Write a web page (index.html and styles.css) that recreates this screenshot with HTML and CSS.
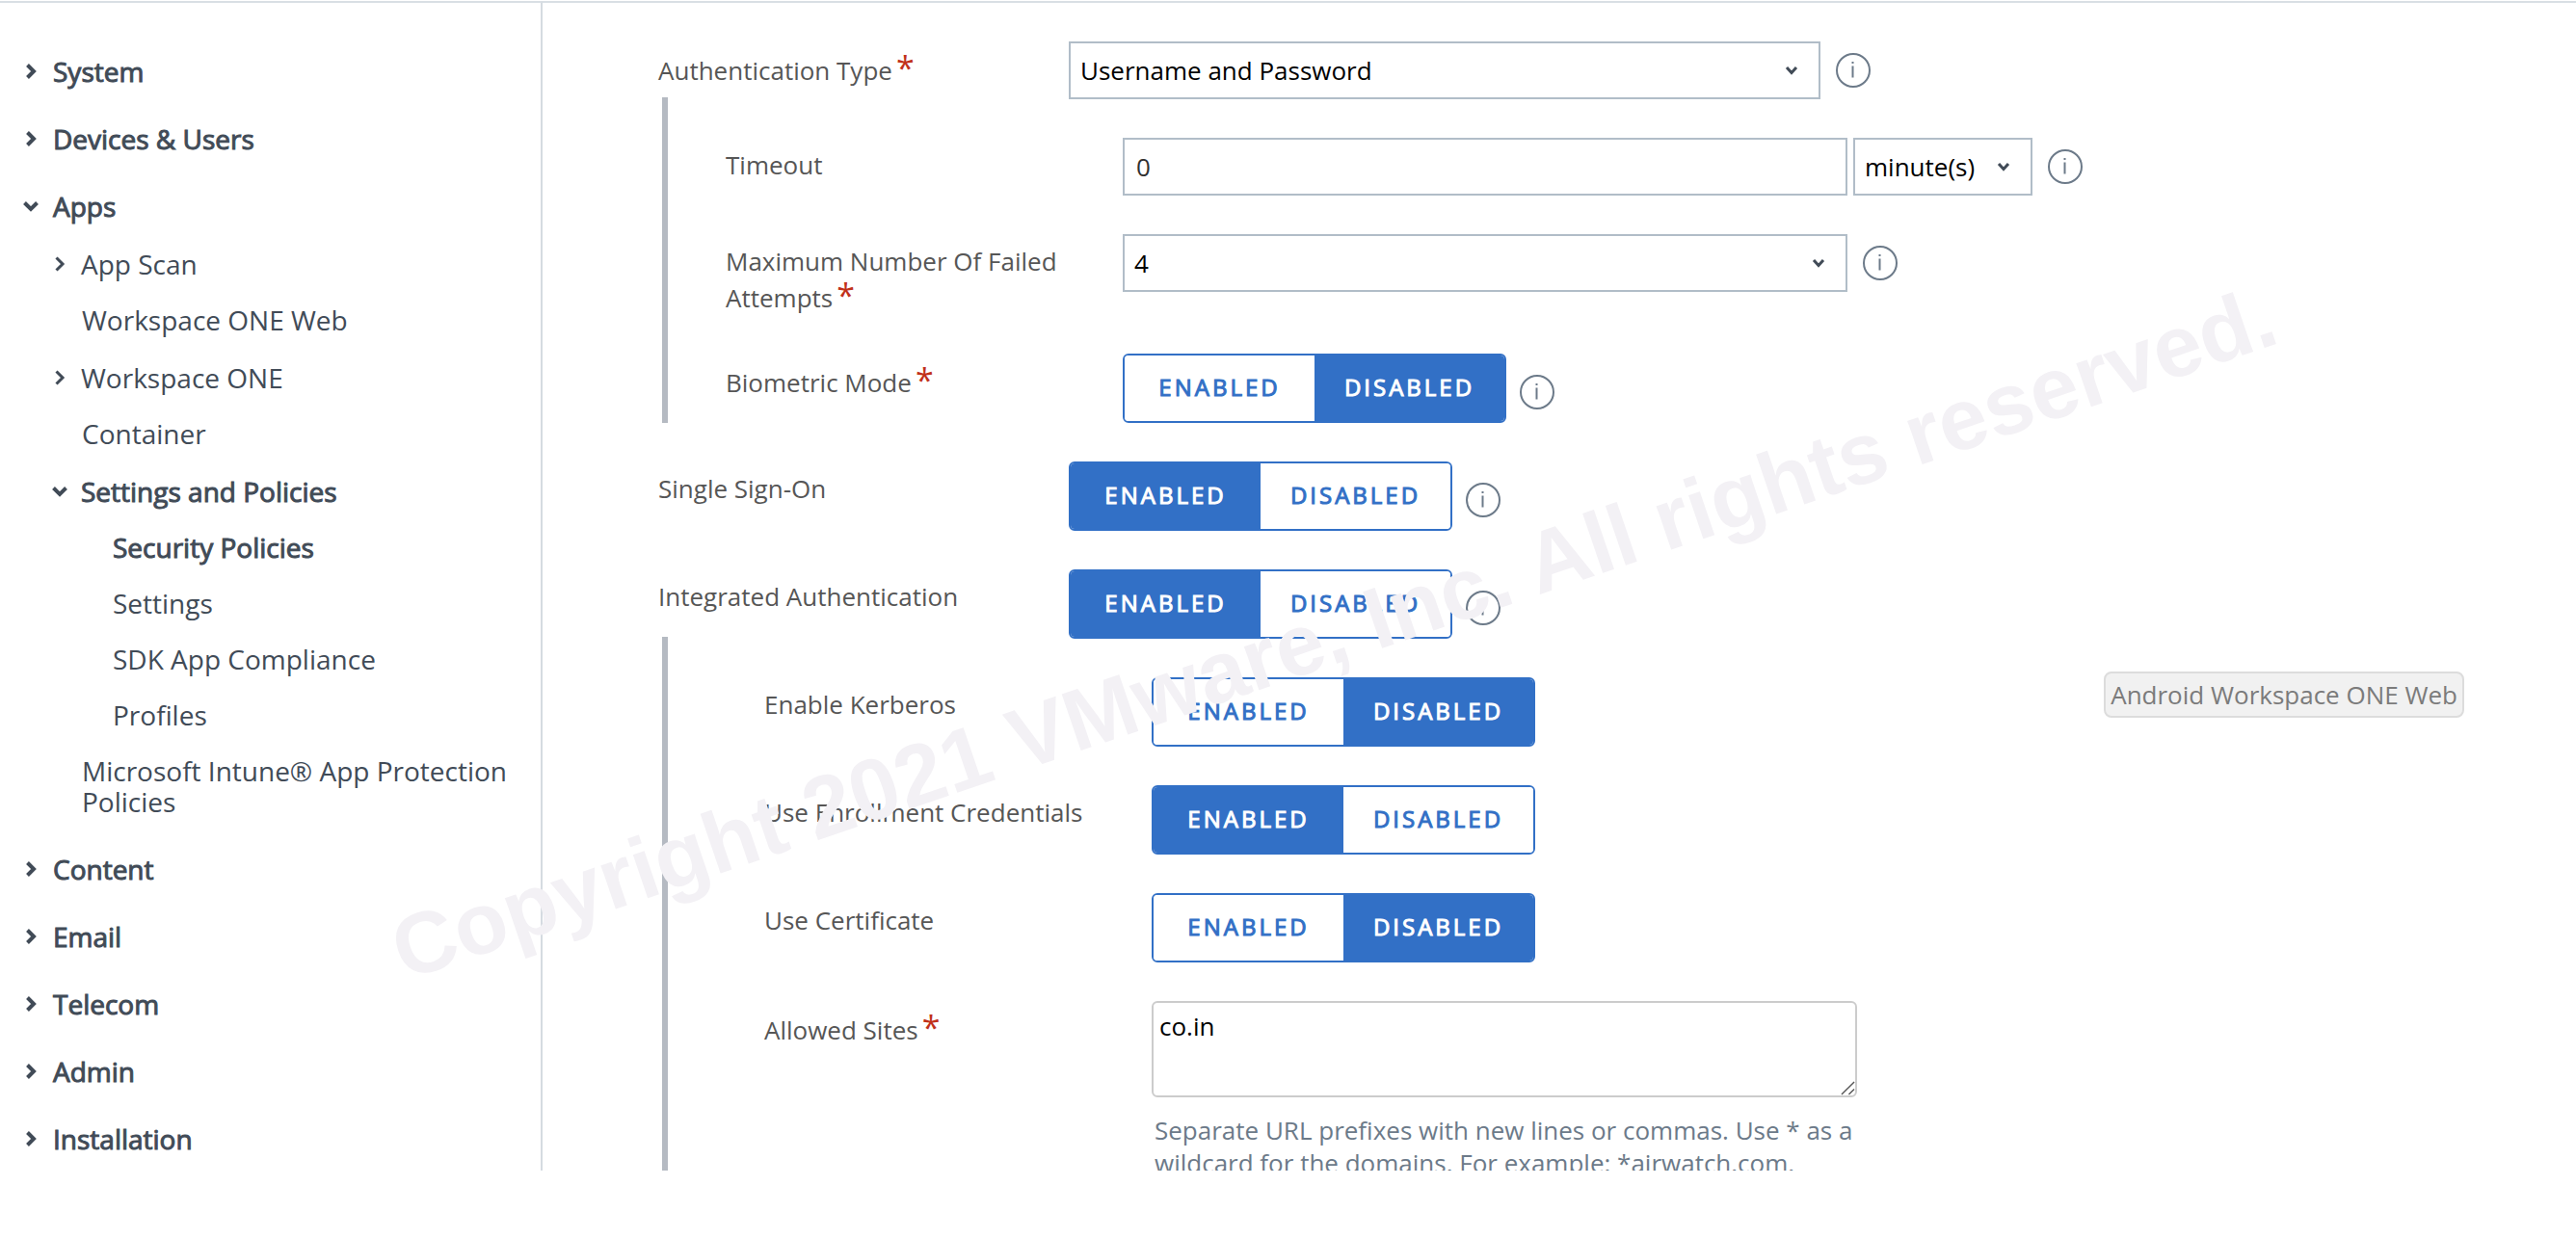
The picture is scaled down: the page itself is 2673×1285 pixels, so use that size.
FILE: index.html
```html
<!DOCTYPE html>
<html lang="en">
<head>
<meta charset="utf-8">
<meta name="viewport" content="width=device-width, initial-scale=1">
<title>Settings - Security Policies</title>
<link rel="stylesheet" href="styles.css">
</head>
<body>
<svg class="symbols" aria-hidden="true">
  <symbol id="chevron-right" viewBox="0 0 16 16"><path d="M4.500 1.500l6.500 6.500-6.500 6.500"/></symbol>
  <symbol id="chevron-down" viewBox="0 0 16 16"><path d="M1.500 4.500l6.500 6.500 6.500-6.500"/></symbol>
  <symbol id="caret" viewBox="0 0 16 16"><path d="M3 5l5 5.500 5-5.500"/></symbol>
  <symbol id="info" viewBox="0 0 36 36"><circle cx="18" cy="18" r="17"/><path d="M17.500 9v2M17.500 13.500v12"/></symbol>
</svg>
<div class="shell">
  <nav class="sidebar" aria-label="Settings">
    <ul class="tree">
      <li><a class="node node--top" href="#system"><svg class="chevron"><use href="#chevron-right"/></svg>System</a></li>
      <li><a class="node node--top" href="#devices"><svg class="chevron"><use href="#chevron-right"/></svg>Devices &amp; Users</a></li>
      <li><a class="node node--top" href="#apps"><svg class="chevron"><use href="#chevron-down"/></svg>Apps</a>
        <ul class="tree tree--second">
          <li><a class="node node--branch" href="#scan"><svg class="chevron"><use href="#chevron-right"/></svg>App Scan</a></li>
          <li><a class="node node--leaf" href="#web">Workspace ONE Web</a></li>
          <li><a class="node node--branch" href="#one"><svg class="chevron"><use href="#chevron-right"/></svg>Workspace ONE</a></li>
          <li><a class="node node--leaf" href="#container">Container</a></li>
          <li><a class="node node--branch node--open" href="#policies"><svg class="chevron"><use href="#chevron-down"/></svg>Settings and Policies</a>
            <ul class="tree tree--third">
              <li><a class="node node--current" href="#security" aria-current="page">Security Policies</a></li>
              <li><a class="node" href="#settings">Settings</a></li>
              <li><a class="node" href="#sdk">SDK App Compliance</a></li>
              <li><a class="node" href="#profiles">Profiles</a></li>
            </ul>
          </li>
          <li><a class="node node--leaf" href="#intune">Microsoft Intune® App Protection Policies</a></li>
        </ul>
      </li>
      <li><a class="node node--top" href="#content"><svg class="chevron"><use href="#chevron-right"/></svg>Content</a></li>
      <li><a class="node node--top" href="#email"><svg class="chevron"><use href="#chevron-right"/></svg>Email</a></li>
      <li><a class="node node--top" href="#telecom"><svg class="chevron"><use href="#chevron-right"/></svg>Telecom</a></li>
      <li><a class="node node--top" href="#admin"><svg class="chevron"><use href="#chevron-right"/></svg>Admin</a></li>
      <li><a class="node node--top" href="#installation"><svg class="chevron"><use href="#chevron-right"/></svg>Installation</a></li>
    </ul>
  </nav>

  <main class="content">
    <form class="form">
      <div class="row">
        <label class="label" for="auth-type">Authentication Type<span class="required">*</span></label>
        <div class="control">
          <span class="select select--main"><select id="auth-type"><option>Username and Password</option></select><svg class="caret"><use href="#caret"/></svg></span>
          <button class="info" type="button" aria-label="About authentication type"><svg><use href="#info"/></svg></button>
        </div>
      </div>

      <div class="group group--auth">
        <div class="row">
          <label class="label" for="timeout">Timeout</label>
          <div class="control">
            <input class="input" id="timeout" type="text" value="0">
            <span class="select select--unit"><select aria-label="Timeout unit"><option>minute(s)</option></select><svg class="caret"><use href="#caret"/></svg></span>
            <button class="info" type="button" aria-label="About timeout"><svg><use href="#info"/></svg></button>
          </div>
        </div>
        <div class="row">
          <label class="label" for="attempts">Maximum Number Of Failed Attempts<span class="required">*</span></label>
          <div class="control">
            <span class="select select--nested"><select id="attempts"><option>4</option></select><svg class="caret"><use href="#caret"/></svg></span>
            <button class="info" type="button" aria-label="About failed attempts"><svg><use href="#info"/></svg></button>
          </div>
        </div>
        <div class="row">
          <span class="label" id="biometric">Biometric Mode<span class="required">*</span></span>
          <div class="control control--toggle">
            <div class="toggle" role="group" aria-labelledby="biometric"><button type="button" aria-pressed="false">ENABLED</button><button type="button" aria-pressed="true">DISABLED</button></div>
            <button class="info" type="button" aria-label="About biometric mode"><svg><use href="#info"/></svg></button>
          </div>
        </div>
      </div>

      <div class="row">
        <span class="label" id="sso">Single Sign-On</span>
        <div class="control control--toggle">
          <div class="toggle" role="group" aria-labelledby="sso"><button type="button" aria-pressed="true">ENABLED</button><button type="button" aria-pressed="false">DISABLED</button></div>
          <button class="info" type="button" aria-label="About single sign-on"><svg><use href="#info"/></svg></button>
        </div>
      </div>
      <div class="row">
        <span class="label" id="integrated">Integrated Authentication</span>
        <div class="control control--toggle">
          <div class="toggle" role="group" aria-labelledby="integrated"><button type="button" aria-pressed="true">ENABLED</button><button type="button" aria-pressed="false">DISABLED</button></div>
          <button class="info" type="button" aria-label="About integrated authentication"><svg><use href="#info"/></svg></button>
        </div>
      </div>

      <div class="group group--integrated">
        <div class="row">
          <span class="label" id="kerberos">Enable Kerberos</span>
          <div class="control control--toggle">
            <div class="toggle" role="group" aria-labelledby="kerberos"><button type="button" aria-pressed="false">ENABLED</button><button type="button" aria-pressed="true">DISABLED</button></div>
          </div>
        </div>
        <div class="row">
          <span class="label" id="enrollment">Use Enrollment Credentials</span>
          <div class="control control--toggle">
            <div class="toggle" role="group" aria-labelledby="enrollment"><button type="button" aria-pressed="true">ENABLED</button><button type="button" aria-pressed="false">DISABLED</button></div>
          </div>
        </div>
        <div class="row">
          <span class="label" id="certificate">Use Certificate</span>
          <div class="control control--toggle">
            <div class="toggle" role="group" aria-labelledby="certificate"><button type="button" aria-pressed="false">ENABLED</button><button type="button" aria-pressed="true">DISABLED</button></div>
          </div>
        </div>
        <div class="row">
          <label class="label" for="sites">Allowed Sites<span class="required">*</span></label>
          <div class="sites">
            <textarea class="textarea" id="sites" aria-describedby="sites-help">co.in</textarea>
            <p class="help" id="sites-help">Separate URL prefixes with new lines or commas. Use * as a wildcard for the domains. For example: *airwatch.com.</p>
          </div>
        </div>
      </div>
    </form>
    <div class="tooltip" role="tooltip">Android Workspace ONE Web</div>
  </main>
</div>
<div class="watermark">Copyright 2021 VMware, Inc. All rights reserved.</div>
</body>
</html>
```
FILE: styles.css
```css
* {
  box-sizing: border-box;
}

body {
  margin: 0;
  position: relative;
  min-height: 100vh;
  overflow: hidden;
  background: #fff;
  font-family: "Open Sans", sans-serif;
  font-size: 26px;
  line-height: 36px;
  color: #565656;
}

.symbols {
  position: absolute;
  width: 0;
  height: 0;
}

svg {
  fill: none;
  stroke: currentColor;
}

/* The shell leaves an empty band under both panes and clips them there. */
.shell {
  display: flex;
  height: calc(100vh - 70px);
  padding-top: 1px;
  overflow: hidden;
}

.sidebar {
  flex: 0 0 563px;
  padding: 17px 24px 0;
  border-top: 2px solid #d9dfe4;
  border-right: 2px solid #d5dbe1;
  overflow: hidden;
}

/* Navigation tree */
.tree {
  margin: 0;
  padding: 0;
  list-style: none;
}

.tree--second {
  padding-left: 30px;
}

.tree--third {
  padding-left: 63px;
}

.node {
  display: block;
  margin-top: 26px;
  font-size: 28px;
  line-height: 32px;
  color: #414b57;
  text-decoration: none;
}

.node--top,
.node--branch {
  display: flex;
  gap: 14px;
}

.node--top {
  gap: 15px;
  margin-top: 38px;
}

.node--branch {
  margin-top: 28px;
}

.node--leaf {
  margin-left: 31px;
}

.node--top,
.node--open,
.node--current {
  -webkit-text-stroke: 1px currentColor;
}

.chevron {
  flex: none;
  width: 16px;
  height: 16px;
  margin-top: 8px;
  stroke-width: 3;
}

.node--top .chevron,
.node--open .chevron {
  stroke-width: 4;
}

/* Form */
.content {
  position: relative;
  flex: 1;
  min-width: 0;
  padding: 40px 120px 0;
  border-top: 2px solid #d9dfe4;
}

.form,
.group {
  display: flex;
  flex-direction: column;
  gap: 40px;
}

.row {
  display: flex;
  align-items: flex-start;
}

.label {
  flex: 0 0 426px;
  padding-top: 10px;
}

.group {
  margin: -42px 0 0 4px;
  padding-top: 42px;
  border-left: 6px solid #b5bac2;
}

.group--auth {
  padding-left: 60px;
}

.group--auth .label {
  flex-basis: 412px;
  padding-right: 48px;
}

.group--integrated {
  padding-left: 100px;
  padding-bottom: 40px;
}

.group--integrated .label {
  flex-basis: 402px;
}

.required {
  margin-left: 4px;
  font-size: 34px;
  line-height: 34px;
  color: #c1311a;
}

.control {
  flex: 1;
  display: flex;
  align-items: center;
  min-width: 0;
}

.select {
  display: grid;
  align-items: center;
}

.select--main {
  flex: 0 1 780px;
}

.select--nested,
.input {
  flex: 0 1 752px;
  min-width: 0;
}

.select--unit {
  flex: 0 0 186px;
  margin-left: 6px;
}

.select select,
.input {
  height: 60px;
  border: 2px solid #b1bdc8;
  border-radius: 0;
  background: #fff;
  font: inherit;
}

.select select {
  grid-area: 1 / 1;
  width: 100%;
  padding: 0 40px 0 10px;
  appearance: none;
  color: #000;
}

.input {
  padding: 0 12px;
  color: #313131;
}

.caret {
  grid-area: 1 / 1;
  justify-self: end;
  width: 16px;
  height: 16px;
  margin-right: 22px;
  color: #414b57;
  stroke-width: 3;
  pointer-events: none;
}

.info {
  flex: none;
  width: 36px;
  height: 36px;
  margin-left: 16px;
  padding: 0;
  border: 0;
  background: none;
  color: #6c7a89;
}

.info svg {
  display: block;
  width: 36px;
  height: 36px;
  stroke-width: 2;
}

.control--toggle {
  align-items: flex-end;
}

.control--toggle .info {
  margin: 0 0 14px 14px;
}

.toggle {
  display: flex;
  width: 398px;
  height: 72px;
  border: 2px solid #3270c6;
  border-radius: 6px;
  overflow: hidden;
}

.toggle button {
  flex: 1 0 0;
  padding: 0 0 4px;
  border: 0;
  background: #fff;
  color: #3270c6;
  font: 24px "Open Sans", sans-serif;
  letter-spacing: 3px;
  -webkit-text-stroke: 1px currentColor;
}

.toggle button[aria-pressed="true"] {
  background: #3270c6;
  color: #fff;
}

.sites {
  flex: 0 1 732px;
}

.textarea {
  display: block;
  width: 100%;
  height: 100px;
  padding: 6px;
  border: 2px solid #ccc;
  border-radius: 6px;
  font: inherit;
  color: #000;
}

.textarea::-webkit-resizer {
  background: url("data:image/svg+xml,%3Csvg xmlns='http://www.w3.org/2000/svg' viewBox='0 0 16 16'%3E%3Cpath d='M1 15L15 1M9 15L15 9' stroke='%23555' stroke-width='1.500'/%3E%3C/svg%3E") no-repeat center / contain;
}

.help {
  margin: 17px 0 0;
  padding-left: 3px;
  line-height: 34px;
  color: #6c7a89;
}

/* Floating label of the pane under the pointer */
.tooltip {
  position: absolute;
  top: 694px;
  right: 116px;
  padding: 4px 5px;
  border: 2px solid #dcdcdc;
  border-radius: 8px;
  background: #f1f1f1;
  color: #7b7b7b;
}

.watermark {
  position: absolute;
  top: 942px;
  left: 420px;
  font: bold 90px/90px "Liberation Sans", Arial, sans-serif;
  color: #f3f1f5;
  white-space: nowrap;
  transform: rotate(-18.8deg);
  transform-origin: 0 76px;
  pointer-events: none;
}
```
